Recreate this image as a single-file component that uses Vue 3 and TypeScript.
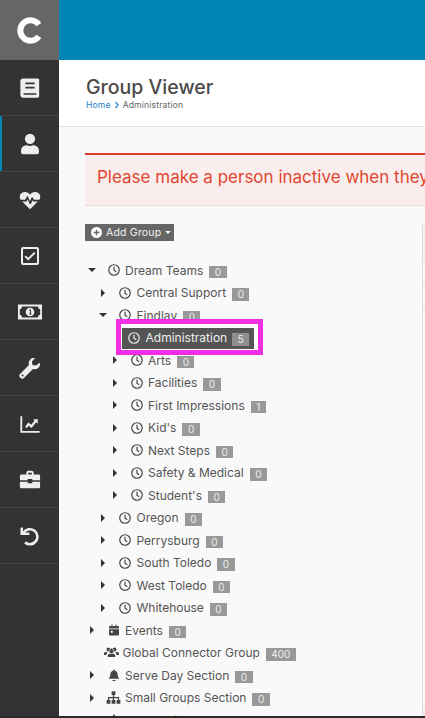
<script setup lang="ts">
type NavItem = { name: string; d: string; size?: number; active?: boolean };
type TreeRow = {
  label: string;
  count: number;
  level: number;
  caret?: 'open' | 'closed';
  icon?: string;
  selected?: boolean;
};

const navItems: NavItem[] = [
  {
    name: 'book',
    d: 'M4.500 1.500H20.500a1.500 1.500 0 0 1 1.500 1.500v18a1.500 1.500 0 0 1-1.500 1.500H5a3.500 3.500 0 0 1-3.500-3.500V4.500a3 3 0 0 1 3-3zM7 6v1.800h10V6zm0 4.700v1.800h10v-1.800zM5 17.700v1.600h14v-1.600z',
  },
  {
    name: 'user',
    active: true,
    d: 'M12 12a5.600 5.600 0 1 0 0-11.200A5.600 5.600 0 0 0 12 12zm3.900 1.400h-.7a7.600 7.600 0 0 1-6.400 0h-.7A5.900 5.900 0 0 0 2.200 19.300v1.800a2.100 2.100 0 0 0 2.100 2.100h15.400a2.100 2.100 0 0 0 2.100-2.100v-1.800a5.900 5.900 0 0 0-5.900-5.900z',
  },
  {
    name: 'heart',
    d: 'M12 22 3.500 13.500h4.700l1.200-2.300 2.300 5.200a.6.600 0 0 0 1.100 0l2-4.200.8 1.300h4.900zM1.800 11.700C-.6 8 1.500 3.500 6 3.200c2.600-.2 4.600 1 6 3 1.400-2 3.400-3.200 6-3 4.500.3 6.600 4.800 4.200 8.500h-5.900l-1.400-2.400a.6.600 0 0 0-1.100.1l-1.900 4-2.300-5.300a.6.600 0 0 0-1.100 0l-1.700 3.600z',
  },
  {
    name: 'check',
    size: 24,
    d: 'M5 3h14a2 2 0 0 1 2 2v14a2 2 0 0 1-2 2H5a2 2 0 0 1-2-2V5a2 2 0 0 1 2-2zm.4 2a.4.4 0 0 0-.4.4v13.200c0 .2.200.4.400.4h13.200a.4.400 0 0 0 .4-.4V5.400a.4.400 0 0 0-.4-.4zm12.100 4.300-7.300 7.200-3.700-3.800 1.300-1.300 2.400 2.400 6-5.900z',
  },
  {
    name: 'money',
    size: 24,
    d: 'M0 4.500h24v15H0zm4 2c0 1.500-1 2.700-2.200 2.700v5.600C3 14.800 4 16 4 17.500h16c0-1.500 1-2.700 2.200-2.700V9.200C21 9.200 20 8 20 6.500zm8 1.200a4.300 4.300 0 1 1 0 8.600 4.300 4.300 0 0 1 0-8.600zm-.8 1.900v1h.7v2.800h-.8v1h2.500v-1h-.7V9.600z',
  },
  {
    name: 'wrench',
    d: 'M22.800 6.300c.5 2-.1 4-1.500 5.400a6 6 0 0 1-6.100 1.400L6 22.300a3.100 3.100 0 1 1-4.300-4.400l9.200-9.200a6 6 0 0 1 1.400-6.100C13.700 1.200 15.800.7 17.700 1.200l-3.600 3.700.6 3.700 3.700.6zM3.900 19a1.100 1.100 0 1 0 0 2.200 1.100 1.100 0 0 0 0-2.200z',
  },
  {
    name: 'chart',
    d: 'M1.500 3.500h2v16h19v2h-21zm5.300 11.300 3.400-4.400 3.200 2.500 3.600-4.800-1.700-1.300h5.200v4.900l-1.800-1.500-4.900 6.200-3.200-2.500-2.200 2.700z',
  },
  {
    name: 'briefcase',
    d: 'M8 6V4.200A2.200 2.200 0 0 1 10.200 2h3.600A2.200 2.200 0 0 1 16 4.200V6h5.500A1.500 1.500 0 0 1 23 7.500v4.700h-8.500v-1.400h-5v1.400H1V7.500A1.500 1.500 0 0 1 2.500 6zm2-2v2h4V4zm-9 10h8.500v1.600h5V14H23v5.500a1.500 1.500 0 0 1-1.500 1.500h-19A1.500 1.500 0 0 1 1 19.500z',
  },
  {
    name: 'undo',
    d: 'M2.200 2.600h1.600a.6.600 0 0 1 .6.600l-.1 3.700a9.600 9.600 0 1 1 1.700 13.500.6.600 0 0 1 0-.9l1.200-1.200a.6.600 0 0 1 .8 0 6.800 6.800 0 1 0-1.300-10l4.100-.2a.6.600 0 0 1 .6.600v1.600a.6.600 0 0 1-.6.600H2.200a.6.600 0 0 1-.6-.6V3.200a.6.600 0 0 1 .6-.6z',
  },
];

const treeRows: TreeRow[] = [
  { label: 'Dream Teams', count: 0, level: 0, caret: 'open' },
  { label: 'Central Support', count: 0, level: 1, caret: 'closed' },
  { label: 'Findlay', count: 0, level: 1, caret: 'open' },
  { label: 'Administration', count: 5, level: 2, selected: true },
  { label: 'Arts', count: 0, level: 2, caret: 'closed' },
  { label: 'Facilities', count: 0, level: 2, caret: 'closed' },
  { label: 'First Impressions', count: 1, level: 2, caret: 'closed' },
  { label: "Kid's", count: 0, level: 2, caret: 'closed' },
  { label: 'Next Steps', count: 0, level: 2, caret: 'closed' },
  { label: 'Safety & Medical', count: 0, level: 2, caret: 'closed' },
  { label: "Student's", count: 0, level: 2, caret: 'closed' },
  { label: 'Oregon', count: 0, level: 1, caret: 'closed' },
  { label: 'Perrysburg', count: 0, level: 1, caret: 'closed' },
  { label: 'South Toledo', count: 0, level: 1, caret: 'closed' },
  { label: 'West Toledo', count: 0, level: 1, caret: 'closed' },
  { label: 'Whitehouse', count: 0, level: 1, caret: 'closed' },
  { label: 'Events', count: 0, level: 0, caret: 'closed', icon: 'calendar' },
  { label: 'Global Connector Group', count: 400, level: 0, icon: 'users' },
  { label: 'Serve Day Section', count: 0, level: 0, caret: 'closed', icon: 'bell' },
  { label: 'Small Groups Section', count: 0, level: 0, caret: 'closed', icon: 'sitemap' },
  { label: 'People Lists', count: 0, level: 0, caret: 'closed', icon: 'bell' },
];

const iconPaths: Record<string, string> = {
  calendar: 'M7 1h2v3h6V1h2v3h3a2 2 0 0 1 2 2v3H2V6a2 2 0 0 1 2-2h3zM2 10.500h20V21a2 2 0 0 1-2 2H4a2 2 0 0 1-2-2zm3.500 3v4h4v-4z',
  users: 'M7 10a3 3 0 1 1 0-6 3 3 0 0 1 0 6zm10 0a3 3 0 1 1 0-6 3 3 0 0 1 0 6zM12 13a3.800 3.800 0 1 1 0-7.600 3.800 3.800 0 0 1 0 7.600zM6 19v-1.500c0-1.800 1.200-3.500 3-3.500h6c1.800 0 3 1.700 3 3.500V19zm-6-3v-2.500C0 12 1.200 11 2.500 11H6c-1 .8-1.500 1.700-1.800 3.100-.1.600-.2 1.300-.2 1.900zm24 0h-4c0-1.300-.6-3.400-2-5h3.500c1.300 0 2.500 1 2.500 2.500z',
  bell: 'M12 1a1.700 1.700 0 0 1 1.700 1.700v1c3.500.7 5.600 3.500 5.600 7 0 4.600 1.500 5.900 2.400 7 .6.700.2 2-1 2H3.300c-1.200 0-1.600-1.300-1-2 .9-1.100 2.400-2.400 2.400-7 0-3.500 2.100-6.300 5.600-7v-1A1.700 1.700 0 0 1 12 1zm-3 21h6a3 3 0 0 1-6 0z',
  sitemap: 'M9 2h6v6h-2v3h8v5h2v6h-6v-6h2v-3h-6v3h2v6H9v-6h2v-3H5v3h2v6H1v-6h2v-5h8V8H9z',
};
</script>

<template>
  <div class="app">
    <nav class="sidebar">
      <div class="logo">
        <svg viewBox="0 0 26 27" width="26" height="27" aria-hidden="true">
          <path d="M21.850 7.650A10.200 10.200 0 1 0 21.850 19.350" fill="none" stroke="#fff" stroke-width="6" />
        </svg>
      </div>
      <a v-for="item in navItems" :key="item.name" class="nav-item" :class="{ active: item.active }">
        <svg viewBox="0 0 24 24" :width="item.size ?? 22" :height="item.size ?? 22" aria-hidden="true">
          <path :d="item.d" fill="#eee" fill-rule="evenodd" />
        </svg>
      </a>
    </nav>

    <div class="page">
      <header class="topbar"></header>
      <section class="title-bar">
        <h1>Group Viewer</h1>
        <div class="crumbs">
          <a>Home</a>
          <svg viewBox="0 0 8 10" width="6" height="8" aria-hidden="true">
            <path d="M2 1l3.500 4L2 9" fill="none" stroke="#2a83c9" stroke-width="1.600" />
          </svg>
          <span>Administration</span>
        </div>
      </section>

      <main class="content">
        <div class="alert">Please make a person inactive when they are no longer attending</div>

        <div class="columns">
          <div class="tree-col">
            <button class="add-btn" type="button">
              <svg viewBox="0 0 24 24" width="11" height="11" aria-hidden="true">
                <path d="M12 0a12 12 0 1 1 0 24 12 12 0 0 1 0-24zM10.500 6v4.500H6v3h4.500V18h3v-4.500H18v-3h-4.500V6z" fill="#fff" fill-rule="evenodd" />
              </svg>
              <span>Add Group</span>
              <i class="btn-caret"></i>
            </button>

            <ul class="tree">
              <li
                v-for="row in treeRows"
                :key="row.label"
                class="row"
                :class="[`level-${row.level}`, { selected: row.selected, 'no-icon-gap': row.icon === 'users' }]"
              >
                <span class="twisty">
                  <i v-if="row.caret" :class="row.caret === 'open' ? 'caret-down' : 'caret-right'"></i>
                </span>
                <svg v-if="row.icon" class="row-icon" :class="row.icon" viewBox="0 0 24 24" aria-hidden="true">
                  <path :d="iconPaths[row.icon]" fill="currentColor" fill-rule="evenodd" />
                </svg>
                <svg v-else class="row-icon" viewBox="0 0 24 24" aria-hidden="true">
                  <circle cx="12" cy="12" r="10.500" fill="none" stroke="currentColor" stroke-width="2.400" />
                  <path d="M12 5.500V12.500L16.500 15.500" fill="none" stroke="currentColor" stroke-width="2.400" />
                </svg>
                <span class="label">{{ row.label }}</span>
                <span class="badge">{{ row.count }}</span>
                <span v-if="row.selected" class="highlight"></span>
              </li>
            </ul>
          </div>

          <aside class="side-panel">
            <div class="side-head"></div>
            <div class="side-row r1"></div>
            <div class="side-row r2"></div>
            <div class="side-row r3"></div>
          </aside>
        </div>
      </main>
    </div>
    <div class="bottom-edge"></div>
  </div>
</template>

<style>
html,
body {
  margin: 0;
  height: 100%;
  overflow: hidden;
  background: #f9f9f9;
}
</style>

<style scoped>
.app {
  display: flex;
  width: 425px;
  height: 718px;
  overflow: hidden;
  position: relative;
  font-family: Inter, "Liberation Sans", sans-serif;
  color: #555;
}

.sidebar {
  flex: 0 0 59px;
  background: #333;
}
.logo {
  height: 60px;
  background: #666;
  display: flex;
  align-items: center;
  justify-content: center;
  box-sizing: border-box;
}
.nav-item {
  display: flex;
  align-items: center;
  justify-content: center;
  height: 56px;
  box-sizing: border-box;
  border-bottom: 1px solid #444;
}
.nav-item.active {
  box-shadow: inset 2px 0 0 #0085b5;
}

.page {
  flex: 1;
  min-width: 0;
  display: flex;
  flex-direction: column;
  background: #f9f9f9;
}
.topbar {
  flex: 0 0 60px;
  background: #0085b5;
}
.title-bar {
  flex: 0 0 67px;
  box-sizing: border-box;
  background: #fff;
  border-bottom: 1px solid #e3e3e3;
  padding: 16px 0 0 27px;
}
h1 {
  margin: 0;
  font-size: 19.500px;
  line-height: 22px;
  font-weight: 500;
  color: #4a4a4a;
}
.crumbs {
  display: flex;
  align-items: center;
  gap: 3px;
  margin-top: 1px;
  font-size: 8.500px;
  line-height: 12px;
  color: #666;
  letter-spacing: 0.2px;
}
.crumbs a {
  color: #2a83c9;
}

.content {
  flex: 1;
  min-height: 0;
  padding: 26px 0 0 26px;
}
.alert {
  box-sizing: border-box;
  width: 560px;
  height: 53px;
  border-top: 2px solid #d63a26;
  border-bottom: 1px solid #e5e1e0;
  background: #f9eeed;
  padding: 11px 0 0 12px;
  font-size: 17px;
  line-height: 22px;
  color: #e2452f;
  white-space: nowrap;
  overflow: hidden;
}

.columns {
  display: flex;
  margin-top: 18px;
}
.tree-col {
  flex: 0 0 337px;
}
.add-btn {
  display: flex;
  align-items: center;
  gap: 4px;
  width: 89px;
  height: 17px;
  padding: 0 0 0 6px;
  border: 0;
  background: #666;
  color: #f1f1f1;
  font: 400 10.500px Inter, "Liberation Sans", sans-serif;
  letter-spacing: 0.2px;
}
.btn-caret {
  width: 0;
  height: 0;
  border-left: 3px solid transparent;
  border-right: 3px solid transparent;
  border-top: 3px solid #f1f1f1;
}

.tree {
  list-style: none;
  margin: 18px 0 0;
  padding: 0;
}
.row {
  display: flex;
  align-items: center;
  height: 22.500px;
  position: relative;
  font-size: 12px;
  white-space: nowrap;
}
.level-0 {
  padding-left: 3.500px;
}
.level-1 {
  padding-left: 15px;
}
.level-2 {
  padding-left: 26.500px;
}
.twisty {
  flex: 0 0 19px;
  display: flex;
  align-items: center;
}
.caret-right {
  width: 0;
  height: 0;
  margin-left: 1px;
  border-top: 4px solid transparent;
  border-bottom: 4px solid transparent;
  border-left: 4px solid #333;
}
.caret-down {
  width: 0;
  height: 0;
  margin-left: -1px;
  border-left: 4px solid transparent;
  border-right: 4px solid transparent;
  border-top: 4px solid #333;
}
.row-icon {
  flex: 0 0 12px;
  width: 12px;
  height: 12px;
  color: #444;
}
.row-icon.users {
  flex-basis: 15px;
  width: 15px;
  height: 15px;
  margin-left: -4px;
}
.row-icon.sitemap {
  flex-basis: 15px;
  width: 15px;
  height: 15px;
  margin-left: -2px;
  margin-right: -1px;
}
.no-icon-gap .label {
  margin-left: 4px;
}
.label {
  margin-left: 5.500px;
}
.badge {
  margin: 3.500px 0 0 6px;
  padding: 0 5.500px;
  height: 12.500px;
  line-height: 12.500px;
  font-size: 10px;
  color: #eee;
  background: #999;
}

.selected {
  color: #eee;
  z-index: 1;
  isolation: isolate;
}
.selected .row-icon {
  color: #eee;
  margin-left: -2.500px;
}
.selected .badge {
  margin: 3px 0 0 5px;
  height: 13px;
  line-height: 13px;
  background: #8f8f8f;
}
.highlight {
  position: absolute;
  left: 31px;
  top: -8px;
  width: 147px;
  height: 36px;
  box-sizing: border-box;
  border: 5px solid #f02ee6;
  background: #fff;
  z-index: -2;
}
.highlight::after {
  content: "";
  position: absolute;
  left: 1px;
  top: 4px;
  width: 132px;
  height: 21px;
  background: #555;
}

.side-panel {
  flex: 1;
  position: relative;
  border: 1px solid #ddd;
  border-right: 0;
  background: #f2f2f2;
  height: 600px;
}
.side-head {
  height: 38px;
  border-bottom: 1px solid #ddd;
}
.side-row {
  background: #f9f9f9;
  border-bottom: 1px solid #ddd;
}
.r1 {
  height: 21px;
}
.r2 {
  height: 23px;
}
.r3 {
  height: 400px;
}

.bottom-edge {
  position: absolute;
  left: 0;
  right: 0;
  bottom: 0;
  height: 2px;
  background: #2b2b2b;
}
</style>
